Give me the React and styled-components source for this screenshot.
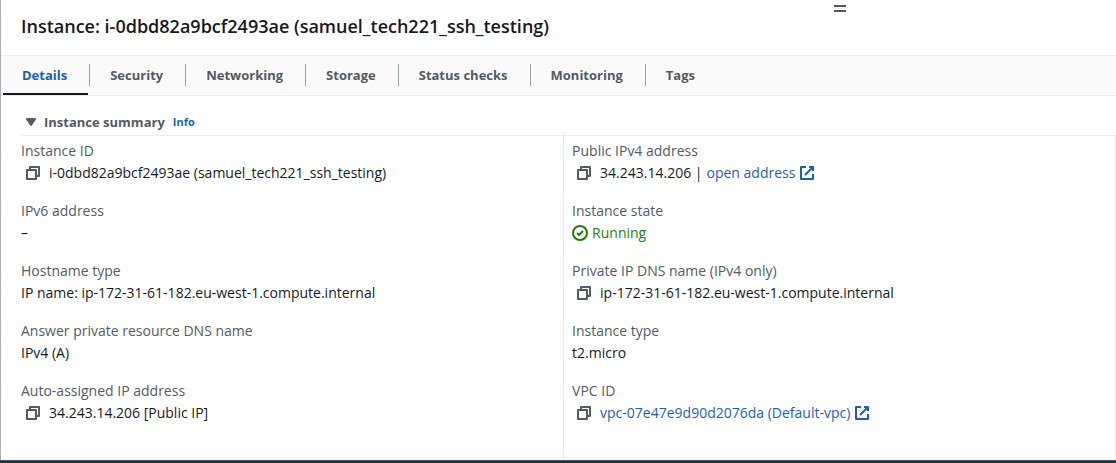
import React, { useState } from "react";
import styled, { createGlobalStyle } from "styled-components";

const GlobalStyle = createGlobalStyle`
  * { box-sizing: border-box; }
  body {
    margin: 0;
    background: #ffffff;
    color: #16191f;
    font-family: "Open Sans", "Noto Sans", sans-serif;
    font-size: 14px;
    line-height: 22px;
  }
`;

const Page = styled.div`
  display: flex;
  flex-direction: column;
  min-height: 100vh;
`;

const Panel = styled.section`
  position: relative;
  flex: 1;
  display: flex;
  flex-direction: column;
  border-left: 1px solid #aab0b8;
`;

const ResizeHandle = styled.button`
  position: absolute;
  top: 5px;
  right: 270px;
  width: 12px;
  height: 7px;
  padding: 0;
  border: solid #545b64;
  border-width: 2px 0;
  background: none;
  cursor: row-resize;
`;

const Title = styled.h1`
  margin: 0;
  padding: 15px 20px 18px;
  font-size: 18px;
  line-height: 22px;
  font-weight: 600;
`;

const TabBar = styled.div`
  display: flex;
  align-items: stretch;
  gap: 1px;
  height: 41px;
  background: #fafafa;
  border: solid #eaeded;
  border-width: 1px 0;
`;

const Tab = styled.button`
  position: relative;
  padding: 0 21px 2px;
  border: 0;
  background: none;
  font: inherit;
  font-size: 13px;
  font-weight: 700;
  color: ${(p) => (p.$active ? "#1d5fb4" : "#545b64")};
  white-space: nowrap;
  cursor: pointer;

  &:not(:first-child)::before {
    content: "";
    position: absolute;
    left: 0;
    top: 8px;
    bottom: 9px;
    border-left: 1px solid #95a5a6;
  }

  &::after {
    content: "";
    display: ${(p) => (p.$active ? "block" : "none")};
    position: absolute;
    left: 2px;
    right: 0;
    bottom: 0;
    height: 2px;
    background: #16191f;
  }
`;

const SummaryHeader = styled.div`
  display: flex;
  align-items: center;
  gap: 8px;
  height: 40px;
  margin-left: 20px;
  margin-right: 1px;
  padding-top: 13px;
  border-bottom: 1px solid #eaeded;
`;

const Toggle = styled.button`
  display: flex;
  align-items: center;
  gap: 5px;
  padding: 0 0 0 2px;
  border: 0;
  background: none;
  font: inherit;
  font-size: 13px;
  font-weight: 700;
  color: #545b64;
  cursor: pointer;
`;

const Link = styled.a`
  display: inline-flex;
  align-items: center;
  gap: 4px;
  color: #1d5fb4;
  text-decoration: none;
`;

const InfoLink = styled(Link)`
  font-size: 11px;
  font-weight: 700;
`;

const Columns = styled.div`
  flex: 1;
  display: grid;
  grid-template-columns: 50.5% 49.5%;
  margin-top: -4px;
`;

const Column = styled.dl`
  display: flex;
  flex-direction: column;
  gap: 16px;
  margin: 0;
  padding: 8px 20px 36px ${(p) => p.$inset};
  border-right: 1px solid #eaeded;
`;

const Term = styled.dt`
  color: #545b64;
`;

const Value = styled.dd`
  display: flex;
  align-items: center;
  gap: 4px;
  margin: 0;
  color: ${(p) => (p.$positive ? "#1d8102" : "inherit")};
`;

const CopyButton = styled.button`
  display: flex;
  padding: 0 4px;
  border: 0;
  background: none;
  color: #545b64;
  cursor: pointer;
`;

const Glyph = styled.svg.attrs({ viewBox: "0 0 16 16", "aria-hidden": true })`
  display: block;
  flex: none;
  width: 16px;
  height: 16px;
  fill: none;
  stroke: currentColor;
  stroke-width: 2;
  stroke-linejoin: round;
`;

const Footer = styled.footer`
  height: 3px;
  background: #232f3e;
  border-top: 1px solid #4a5360;
`;

const CaretIcon = () => (
  <Glyph><path d="M4 5h8l-4 6z" fill="currentColor" /></Glyph>
);

const ExternalIcon = () => (
  <Glyph>
    <path d="M10 2h4v4M6 10l8-8M14 9v5H2V2h5" />
  </Glyph>
);

const CheckIcon = () => (
  <Glyph>
    <circle cx="8" cy="8" r="7" />
    <path d="m5 8 2 2 4-4" />
  </Glyph>
);

const Copy = ({ label }) => (
  <CopyButton type="button" aria-label={`Copy ${label}`}>
    <Glyph><path d="M2 5h9v9H2zM5 5V2h9v9h-3" /></Glyph>
  </CopyButton>
);

const Detail = ({ term, copy, positive, children }) => (
  <div>
    <Term>{term}</Term>
    <Value $positive={positive}>
      {copy && <Copy label={term} />}
      {children}
    </Value>
  </div>
);

const TABS = ["Details", "Security", "Networking", "Storage", "Status checks", "Monitoring", "Tags"];

export default function App() {
  const [active, setActive] = useState("Details");
  const [open, setOpen] = useState(true);
  return (
    <Page>
      <GlobalStyle />
      <Panel>
        <ResizeHandle type="button" aria-label="Resize panel" />
        <Title>Instance: i-0dbd82a9bcf2493ae (samuel_tech221_ssh_testing)</Title>
        <TabBar role="tablist">
          {TABS.map((tab) => (
            <Tab
              key={tab}
              type="button"
              role="tab"
              aria-selected={tab === active}
              $active={tab === active}
              onClick={() => setActive(tab)}
            >
              {tab}
            </Tab>
          ))}
        </TabBar>
        <SummaryHeader>
          <Toggle type="button" aria-expanded={open} onClick={() => setOpen(!open)}>
            <CaretIcon />
            Instance summary
          </Toggle>
          <InfoLink href="#info">Info</InfoLink>
        </SummaryHeader>
        {open && (
          <Columns>
            <Column $inset="20px">
              <Detail term="Instance ID" copy>i-0dbd82a9bcf2493ae (samuel_tech221_ssh_testing)</Detail>
              <Detail term="IPv6 address">–</Detail>
              <Detail term="Hostname type">IP name: ip-172-31-61-182.eu-west-1.compute.internal</Detail>
              <Detail term="Answer private resource DNS name">IPv4 (A)</Detail>
              <Detail term="Auto-assigned IP address" copy>34.243.14.206 [Public IP]</Detail>
            </Column>
            <Column $inset="8px">
              <Detail term="Public IPv4 address" copy>
                <span>34.243.14.206 |</span>
                <Link href="#address">open address <ExternalIcon /></Link>
              </Detail>
              <Detail term="Instance state" positive>
                <CheckIcon />
                Running
              </Detail>
              <Detail term="Private IP DNS name (IPv4 only)" copy>ip-172-31-61-182.eu-west-1.compute.internal</Detail>
              <Detail term="Instance type">t2.micro</Detail>
              <Detail term="VPC ID" copy>
                <Link href="#vpc">vpc-07e47e9d90d2076da (Default-vpc) <ExternalIcon /></Link>
              </Detail>
            </Column>
          </Columns>
        )}
      </Panel>
      <Footer />
    </Page>
  );
}
